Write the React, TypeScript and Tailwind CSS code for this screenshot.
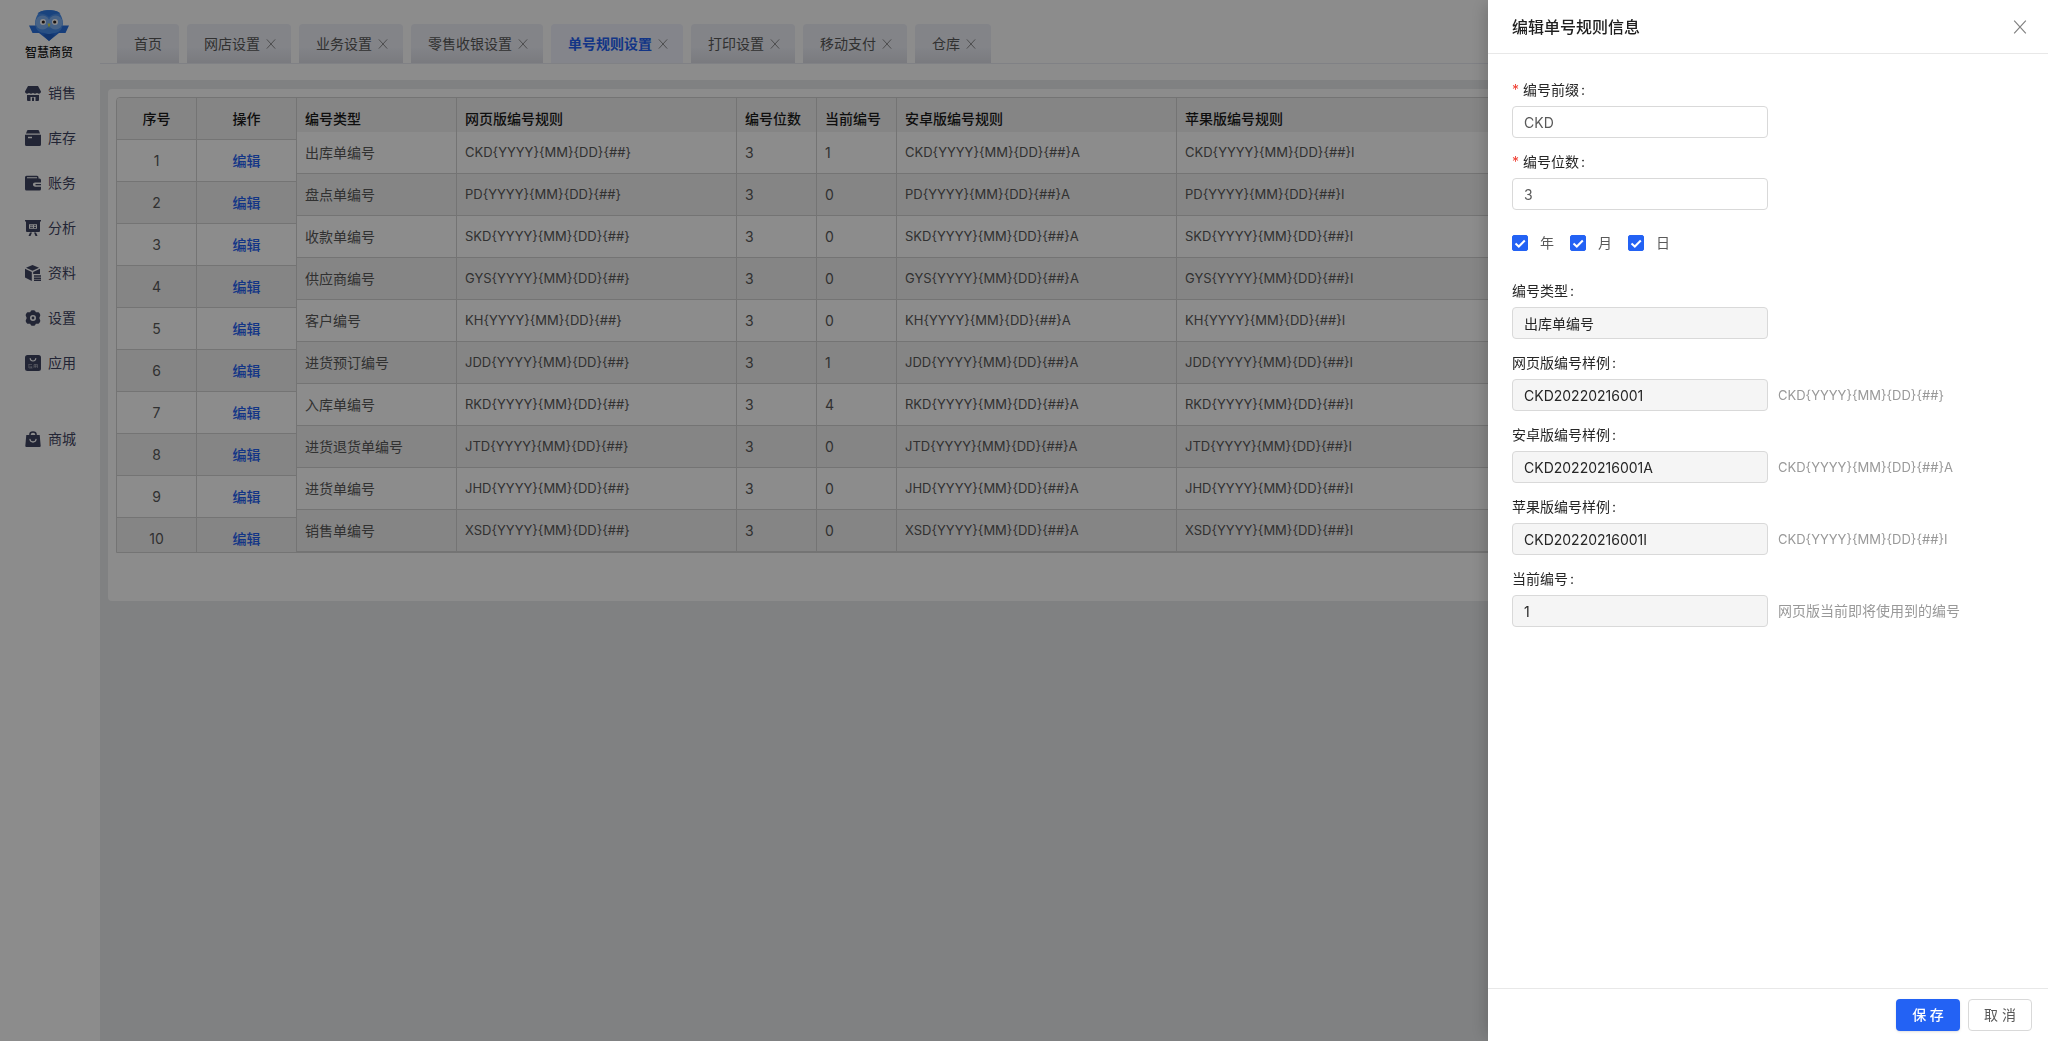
import { useState } from 'react';
import type { ReactNode } from 'react';
import clsx from 'clsx';

const menus = [
  { label: '销售', icon: 'shop' },
  { label: '库存', icon: 'box' },
  { label: '账务', icon: 'wallet' },
  { label: '分析', icon: 'board' },
  { label: '资料', icon: 'cube' },
  { label: '设置', icon: 'gear' },
  { label: '应用', icon: 'app' },
];

const tabs = ['首页', '网店设置', '业务设置', '零售收银设置', '单号规则设置', '打印设置', '移动支付', '仓库'];

const rules = [
  { type: '出库单编号', prefix: 'CKD', current: 1 },
  { type: '盘点单编号', prefix: 'PD', current: 0 },
  { type: '收款单编号', prefix: 'SKD', current: 0 },
  { type: '供应商编号', prefix: 'GYS', current: 0 },
  { type: '客户编号', prefix: 'KH', current: 0 },
  { type: '进货预订编号', prefix: 'JDD', current: 1 },
  { type: '入库单编号', prefix: 'RKD', current: 4 },
  { type: '进货退货单编号', prefix: 'JTD', current: 0 },
  { type: '进货单编号', prefix: 'JHD', current: 0 },
  { type: '销售单编号', prefix: 'XSD', current: 0 },
];

const PATTERN = '{YYYY}{MM}{DD}{##}';

const iconShapes: Record<string, ReactNode> = {
  shop: (
    <>
      <path d="M3 1h10l3 5.5c0 1.4-1 2.2-2.1 2.2S12 8 12 8s-.8.7-2 .7S8 8 8 8s-.8.7-2 .7S4 8 4 8s-.8.7-1.900.7S0 7.900 0 6.500z" />
      <path d="M2 10h12v5a1 1 0 0 1-1 1h-2.500v-4h-5v4H3a1 1 0 0 1-1-1z" />
      <path d="M7 12.500h2V16H7z" />
    </>
  ),
  box: (
    <>
      <path d="M3 0h10a1 1 0 0 1 .9.600L15 3.500H1L2.100.600A1 1 0 0 1 3 0z" />
      <path fillRule="evenodd" d="M0 4.700h16V14.500a1.500 1.500 0 0 1-1.500 1.500h-13A1.500 1.500 0 0 1 0 14.500zM3 6.800v1.500h4V6.800z" />
    </>
  ),
  wallet: (
    <>
      <path fillRule="evenodd" d="M1.500.800H12a1.500 1.500 0 0 1 1.500 1.500V3.500H14.500A1.500 1.500 0 0 1 16 5v2.500h-6a1.800 1.800 0 0 0 0 4.200h6V14a1.500 1.500 0 0 1-1.500 1.500h-13A1.500 1.500 0 0 1 0 14V2.300A1.500 1.500 0 0 1 1.500.800zM2 2.300v1h10v-1z" />
      <path d="M10.500 9h5.500v1.300h-5.500z" />
    </>
  ),
  board: (
    <>
      <path fillRule="evenodd" d="M0 0h16v1.500h-1V11a1 1 0 0 1-1 1H2a1 1 0 0 1-1-1V1.500H0zM4 4.300v4.500h8V4.300z" />
      <path d="M5 5.500h3v.8H5zM5 7.200h3V8H5zM9 5.300h2v1H9zM9 7h2v1H9z" />
      <path d="M5 12.500h2L5.500 16h-2zM9 12.500h2l1.500 3.500h-2z" />
    </>
  ),
  cube: (
    <>
      <path d="M7.500 0 14 2.700 7.500 5.700 1 2.700z" />
      <path d="M0 3.800 6.800 7v9L0 12.600zM8.200 7 15 3.800V9H8.200z" />
      <path d="M9 10.200h7v1.500H9zM9 12.400h7v1.500H9zM9 14.600h7V16H9z" />
    </>
  ),
  gear: (
    <path
      fillRule="evenodd"
      d="M6 .8C6.500 0 9.500 0 10 .8l.9 1.500 2.300-.1c1 0 2.500 2.600 2 3.500L14.300 8l.9 2.300c.5.900-1 3.500-2 3.500l-2.300-.1-.9 1.500c-.5.800-3.500.8-4 0l-.9-1.500-2.300.1c-1 0-2.500-2.600-2-3.500L1.700 8 .8 5.700c-.5-.9 1-3.500 2-3.500l2.300.1zM8 5a3 3 0 1 0 0 6 3 3 0 0 0 0-6zm0 1.600a1.400 1.400 0 1 1 0 2.800 1.400 1.400 0 0 1 0-2.800z"
    />
  ),
  app: (
    <>
      <rect width="16" height="16" rx="2.500" />
      <path d="M5.200 3.500c.4 3.300 5.200 3.300 5.600 0" fill="none" stroke="#fff" strokeWidth="1.200" strokeLinecap="round" />
      <path d="M3.500 9.500h3.500M3.800 9.500v3.500M5 11l.3 1.500M6.800 11l-.5 2M4 13h3.500M9 9.500h3.500V13M9 9.500V13M10.700 9.500V13M9 11.200h3.500" fill="none" stroke="#fff" strokeOpacity=".6" strokeWidth=".6" />
    </>
  ),
  bag: (
    <>
      <path d="M5 5V3.300C5 .2 11 .2 11 3.300V5" fill="none" stroke="currentColor" strokeWidth="1.600" />
      <path d="M1.300 4h13.400L15.700 15a1 1 0 0 1-1 1H1.300a1 1 0 0 1-1-1z" />
      <path d="M5 8.500c.5 3.300 5.500 3.300 6 0" fill="none" stroke="#fff" strokeWidth="1.300" strokeLinecap="round" />
    </>
  ),
};

function MenuLink({ label, icon }: { label: string; icon: string }) {
  return (
    <a href="#" className="flex h-[45px] items-center gap-[7px] pl-[25px] text-sm text-[#3f4462]">
      <svg viewBox="0 0 16 16" className="size-4" fill="currentColor" aria-hidden="true">
        {iconShapes[icon]}
      </svg>
      {label}
    </a>
  );
}

function Logo() {
  return (
    <svg viewBox="0 0 40 31" className="h-[31px] w-10" aria-hidden="true">
      <path d="M0 15.500h8l1 3h22l1-3h8L36.500 23H30L20 31l-10-8H3.500z" fill="#2a72e0" />
      <path d="M9 4C12-1.300 28-1.300 31 4c4 6 4 14-1 17.500-4 2.500-7 .5-10 3.500-3-3-6-1-10-3.500C5 18 5 10 9 4z" fill="#4a90ee" />
      <circle cx="13.500" cy="12.500" r="7" fill="#80b2f5" />
      <circle cx="26.500" cy="12.500" r="7" fill="#80b2f5" />
      <path d="M8.500 3.500C12-1 28-1 31.500 3.500c-4-.500-8.500.5-11.500 3.500-3-3-7.500-4-11.500-3.500z" fill="#2f7be6" />
      <circle cx="14" cy="12" r="3" fill="#fff" />
      <circle cx="26" cy="12" r="3" fill="#fff" />
      <circle cx="14.300" cy="12" r="1.600" fill="#30231f" />
      <circle cx="25.700" cy="12" r="1.600" fill="#30231f" />
      <path d="M18.500 13.500h3L20 18z" fill="#d8e04a" />
      <path d="M14 25c3-1.500 9-1.500 12 0L20 31z" fill="#2262c8" />
    </svg>
  );
}

function CloseIcon({ className }: { className: string }) {
  return (
    <svg viewBox="0 0 12 12" className={className} fill="none" stroke="currentColor" aria-hidden="true">
      <path d="M1 .5 11 11.500M11 .5 1 11.500" />
    </svg>
  );
}

function FixedColumns() {
  return (
    <table className="w-[180px] shrink-0 table-fixed border-separate border-spacing-0 text-center">
      <thead>
        <tr className="h-[42px] bg-[#f3f3f3] text-[#1a1a1a]">
          <th className="w-20 border-r border-b border-[#d3d3d3] font-medium">序号</th>
          <th className="w-[100px] border-r border-b border-[#d3d3d3] font-medium">操作</th>
        </tr>
      </thead>
      <tbody>
        {rules.map((rule, i) => (
          <tr key={rule.prefix} className="h-[42px] even:bg-[#f3f3f3]">
            <td className="border-r border-b border-[#d3d3d3]">{i + 1}</td>
            <td className="border-r border-b border-[#d3d3d3]">
              <a href="#" className="font-medium text-[#2362f4]">编辑</a>
            </td>
          </tr>
        ))}
      </tbody>
    </table>
  );
}

function RuleTable() {
  const th = 'border-r border-[#d3d3d3] px-2 pt-2 font-medium last:border-r-0';
  const td = 'border-r border-b border-[#d3d3d3] px-2 last:border-r-0';
  return (
    <table className="min-w-0 flex-1 table-fixed border-separate border-spacing-0 text-left">
      <thead>
        <tr className="h-[34px] bg-[#f3f3f3] text-[#1a1a1a]">
          <th className={clsx(th, 'w-40')}>编号类型</th>
          <th className={clsx(th, 'w-[280px]')}>网页版编号规则</th>
          <th className={clsx(th, 'w-20')}>编号位数</th>
          <th className={clsx(th, 'w-20')}>当前编号</th>
          <th className={clsx(th, 'w-[280px]')}>安卓版编号规则</th>
          <th className={th}>苹果版编号规则</th>
        </tr>
      </thead>
      <tbody>
        {rules.map((rule) => (
          <tr key={rule.prefix} className="h-[42px] even:bg-[#f3f3f3]">
            <td className={td}>{rule.type}</td>
            <td className={clsx(td, 'text-[13px]')}>{rule.prefix + PATTERN}</td>
            <td className={td}>3</td>
            <td className={td}>{rule.current}</td>
            <td className={clsx(td, 'text-[13px]')}>{rule.prefix + PATTERN}A</td>
            <td className={clsx(td, 'text-[13px]')}>{rule.prefix + PATTERN}I</td>
          </tr>
        ))}
      </tbody>
    </table>
  );
}

type FieldProps = {
  id: string;
  label: string;
  value: string;
  required?: boolean;
  hint?: ReactNode;
  onChange?: (value: string) => void;
};

function Field({ id, label, value, required, hint, onChange }: FieldProps) {
  return (
    <div className="mb-3">
      <label htmlFor={id} className="mb-1 flex h-6 items-center text-[#262626]">
        {required && <span className="mr-1 text-[#f04134]">*</span>}
        {label}
        <span className="ml-0.5">:</span>
      </label>
      <div className="flex items-center gap-2.5">
        <input
          id={id}
          value={value}
          disabled={!onChange}
          onChange={(e) => onChange?.(e.target.value)}
          className="h-8 w-64 rounded border border-[#d9d9d9] bg-white px-[11px] text-[#595959] disabled:bg-[#f5f5f5] disabled:text-[#262626]"
        />
        {hint && <span className="text-[#999]">{hint}</span>}
      </div>
    </div>
  );
}

function DatePart({ label }: { label: string }) {
  const [checked, setChecked] = useState(true);
  return (
    <label className="flex items-center gap-3">
      <span className="relative size-4">
        <input
          type="checkbox"
          checked={checked}
          onChange={(e) => setChecked(e.target.checked)}
          className="block size-4 appearance-none rounded-xs border border-[#d9d9d9] checked:border-[#2362f4] checked:bg-[#2362f4]"
        />
        {checked && (
          <svg viewBox="0 0 16 16" className="pointer-events-none absolute inset-0 size-4" fill="none" stroke="#fff" strokeWidth="2" aria-hidden="true">
            <path d="m3.500 8.500 3.300 3 6-6" />
          </svg>
        )}
      </span>
      {label}
    </label>
  );
}

function EditDrawer() {
  const [prefix, setPrefix] = useState('CKD');
  const [digits, setDigits] = useState('3');
  const sample = 'CKD20220216001';
  const rule = 'CKD' + PATTERN;

  return (
    <aside className="fixed inset-y-0 right-0 flex w-[560px] flex-col bg-white text-[#595959] shadow-[-6px_0_16px_-4px_rgba(0,0,0,0.2)]">
      <div className="flex h-[54px] items-center justify-between border-b border-[#e8e8e8] pr-[21px] pl-6">
        <h2 className="text-base font-medium text-[#1f1f1f]">编辑单号规则信息</h2>
        <button aria-label="关闭" className="text-[#808080]">
          <CloseIcon className="size-3.5" />
        </button>
      </div>

      <form className="flex-1 overflow-auto p-6">
        <Field id="prefix" label="编号前缀" value={prefix} required onChange={setPrefix} />
        <Field id="digits" label="编号位数" value={digits} required onChange={setDigits} />
        <div className="flex gap-4 pt-[9px] pb-6 leading-6">
          <DatePart label="年" />
          <DatePart label="月" />
          <DatePart label="日" />
        </div>
        <Field id="type" label="编号类型" value="出库单编号" />
        <Field id="web" label="网页版编号样例" value={sample} hint={<span className="text-[13px]">{rule}</span>} />
        <Field id="android" label="安卓版编号样例" value={sample + 'A'} hint={<span className="text-[13px]">{rule}A</span>} />
        <Field id="ios" label="苹果版编号样例" value={sample + 'I'} hint={<span className="text-[13px]">{rule}I</span>} />
        <Field id="current" label="当前编号" value="1" hint="网页版当前即将使用到的编号" />
      </form>

      <div className="flex justify-end gap-2 border-t border-[#e8e8e8] px-4 py-2.5">
        <button className="h-8 w-16 rounded bg-[#2362f4] font-medium text-white shadow-sm">保 存</button>
        <button className="h-8 w-16 rounded border border-[#d9d9d9] bg-white">取 消</button>
      </div>
    </aside>
  );
}

export default function App() {
  const active = '单号规则设置';

  return (
    <div className="flex min-h-screen bg-[#e9ebed] font-['Inter','Noto_Sans_CJK_SC',sans-serif] text-sm text-[#595959]">
      <nav className="w-[100px] shrink-0 bg-white">
        <div className="flex flex-col items-center pt-2.5 pr-0.5 pb-[5px]">
          <Logo />
          <span className="text-xs leading-6 font-medium text-[#1a1a1a]">智慧商贸</span>
        </div>
        {menus.map((m) => (
          <MenuLink key={m.label} label={m.label} icon={m.icon} />
        ))}
        <div className="mt-[31px]">
          <MenuLink label="商城" icon="bag" />
        </div>
      </nav>

      <div className="min-w-0 flex-1">
        <header className="h-20 bg-white pt-6">
          <div className="flex h-10 gap-2 border-b border-[#e9ebf3] pl-[17px]">
            {tabs.map((tab) => (
              <div
                key={tab}
                className={clsx(
                  'flex h-[39px] items-center gap-1.5 rounded-t',
                  tab === '首页' ? 'px-[17px]' : 'pr-[15px] pl-[17px]',
                  tab === active
                    ? 'bg-[#f0f3fd]'
                    : 'bg-linear-to-b from-[#eef0f8] from-60% to-[#dedfe7]',
                )}
              >
                <a href="#" className={tab === active ? 'font-bold text-[#2362f4]' : ''}>{tab}</a>
                {tab !== '首页' && (
                  <button aria-label={'关闭' + tab} className="text-[#7a7a7a]">
                    <CloseIcon className="size-2.5" />
                  </button>
                )}
              </div>
            ))}
          </div>
        </header>

        <main className="pt-[9px] pl-2">
          <section className="rounded bg-white pt-2 pr-4 pb-12 pl-2">
            <div className="flex h-[456px] overflow-hidden rounded-t border border-[#d3d3d3]">
              <FixedColumns />
              <RuleTable />
            </div>
          </section>
        </main>
      </div>

      <div className="fixed inset-0 bg-black/45" />
      <EditDrawer />
    </div>
  );
}
